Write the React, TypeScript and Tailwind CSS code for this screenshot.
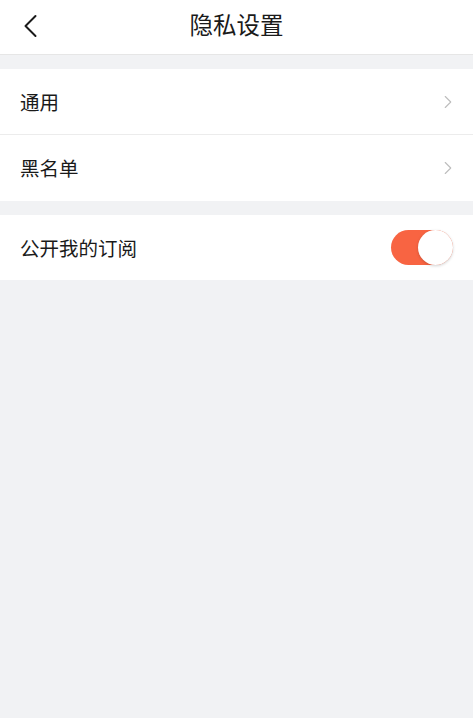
import { ChevronRight } from 'lucide-react';

const font = { fontFamily: '"Noto Sans CJK SC", "Noto Sans", sans-serif' };

const NavRow = ({ label, divider }: { label: string; divider?: boolean }) => (
	<div className="relative flex h-[66px] items-center justify-between bg-white pl-5 pr-[14px]">
		<span className="text-[19.5px] text-[#1a1a1a]">{label}</span>
		<ChevronRight className="h-[22px] w-[22px] text-[#bdbdbd]" strokeWidth={1.2} />
		{divider && <div className="absolute bottom-0 left-0 right-0 h-px bg-[#ececec]" />}
	</div>
);

const PrivacySettings = () => {
	return (
		<div className="min-h-[718px] w-full bg-[#f1f2f4]" style={font}>
			<header className="relative flex h-[55px] items-start justify-center border-b border-[#e6e6e6] bg-white pt-[7px]">
				<button className="absolute left-[20px] top-[10px] p-1">
					<svg width="14" height="24" viewBox="0 0 14 24" fill="none">
						<path d="M11.5 2 L1.5 12 L11.5 22" stroke="#1a1a1a" strokeWidth="2" strokeLinecap="round" strokeLinejoin="round" />
					</svg>
				</button>
				<h1 className="text-[23.5px] font-normal leading-[34px] text-[#1a1a1a]">隐私设置</h1>
			</header>

			<div className="mt-[14px]">
				<NavRow label="通用" divider />
				<NavRow label="黑名单" />
			</div>

			<div className="mt-[14px] flex h-[65px] items-center justify-between bg-white pl-5 pr-[20px]">
				<span className="text-[19.5px] text-[#1a1a1a]">公开我的订阅</span>
				<div className="relative h-[35px] w-[62px] rounded-full bg-[#f86442]">
					<div className="absolute right-0 top-0 h-[35px] w-[35px] rounded-full bg-white shadow-[0_1px_3px_rgba(0,0,0,0.18)]" />
				</div>
			</div>
		</div>
	);
};

export default PrivacySettings;
